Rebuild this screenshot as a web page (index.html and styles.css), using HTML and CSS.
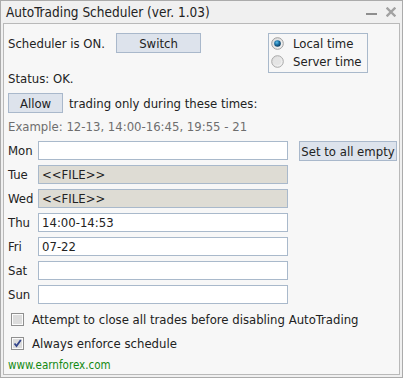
FILE: index.html
```html
<!DOCTYPE html>
<html>
<head>
	<title>AutoTrading Scheduler</title>
	<link rel="stylesheet" href="styles.css">
</head>
<body>
	<!-- dialog window -->
	<div class="window">
		<div class="titlebar">
			<span class="title">AutoTrading Scheduler (ver. 1.03)</span>
			<span class="controls">
				<svg width="11" height="10" viewBox="0 0 11 10"><rect x="0" y="6" width="11" height="2" fill="#8e8e8e"/></svg>
				<svg width="10" height="10" viewBox="0 0 10 10"><path d="M1.5 1.5 L8.5 8.5 M8.5 1.5 L1.5 8.5" stroke="#a2a2a2" stroke-width="2.4" stroke-linecap="square"/></svg>
			</span>
		</div>
		<div class="panel">
			<div class="top">
				<div class="top-left">
					<div class="sched">
						<span class="sched-label">Scheduler is ON.</span>
						<button class="btn btn-switch" type="button">Switch</button>
					</div>
					<div class="status">Status: OK.</div>
				</div>
				<!-- time source -->
				<div class="timebox">
					<div class="radio">
						<svg width="13" height="13" viewBox="0 0 13 13">
							<defs>
								<radialGradient id="dot" cx="0.4" cy="0.35" r="0.7">
									<stop offset="0" stop-color="#5fc0ea"/>
									<stop offset="0.5" stop-color="#1a6fa3"/>
									<stop offset="1" stop-color="#0c3553"/>
								</radialGradient>
								<linearGradient id="ring" x1="0" y1="0" x2="1" y2="1">
									<stop offset="0" stop-color="#d9d9d9"/>
									<stop offset="1" stop-color="#f7f7f7"/>
								</linearGradient>
							</defs>
							<circle cx="6.5" cy="6.5" r="5.8" fill="url(#ring)" stroke="#9d9d9d"/>
							<circle cx="6.5" cy="6.5" r="3.3" fill="url(#dot)"/>
						</svg>
						<span>Local time</span>
					</div>
					<div class="radio">
						<svg width="13" height="13" viewBox="0 0 13 13">
							<circle cx="6.5" cy="6.5" r="5.8" fill="url(#ring)" stroke="#a8a8a8"/>
							<circle cx="6.5" cy="6.5" r="3.6" fill="#e4e4e4"/>
						</svg>
						<span>Server time</span>
					</div>
				</div>
			</div>
			<div class="allow">
				<button class="btn btn-allow" type="button">Allow</button>
				<span class="allow-text">trading only during these times:</span>
			</div>
			<div class="example">Example: 12-13, 14:00-16:45, 19:55 - 21</div>
			<!-- week days -->
			<div class="days">
				<label class="day">Mon</label>
				<input class="day-input" type="text" value="">
				<button class="btn btn-empty" type="button">Set to all empty</button>
				<label class="day">Tue</label>
				<input class="day-input locked" type="text" value="<<FILE>>" readonly>
				<span></span>
				<label class="day">Wed</label>
				<input class="day-input locked" type="text" value="<<FILE>>" readonly>
				<span></span>
				<label class="day">Thu</label>
				<input class="day-input" type="text" value="14:00-14:53">
				<span></span>
				<label class="day">Fri</label>
				<input class="day-input" type="text" value="07-22">
				<span></span>
				<label class="day">Sat</label>
				<input class="day-input" type="text" value="">
				<span></span>
				<label class="day">Sun</label>
				<input class="day-input" type="text" value="">
				<span></span>
			</div>
			<div class="checks">
				<div class="check">
					<svg width="13" height="13" viewBox="0 0 13 13">
						<rect x="0.5" y="0.5" width="12" height="12" fill="#fbfbfb" stroke="#8f8f8f"/>
						<rect x="2" y="2" width="9" height="9" fill="#dcdcdc"/>
					</svg>
					<span>Attempt to close all trades before disabling AutoTrading</span>
				</div>
				<div class="check">
					<svg width="13" height="13" viewBox="0 0 13 13">
						<rect x="0.5" y="0.5" width="12" height="12" fill="#fbfbfb" stroke="#8f8f8f"/>
						<rect x="2" y="2" width="9" height="9" fill="#dcdcdc"/>
						<path d="M3.5 6.5 L5.5 9 L9.8 3" fill="none" stroke="#34468c" stroke-width="1.8"/>
					</svg>
					<span>Always enforce schedule</span>
				</div>
			</div>
			<div class="footer">www.earnforex.com</div>
		</div>
	</div>
</body>
</html>
```

FILE: styles.css
```css
body {
	margin: 0;
	font-family: "DejaVu Sans Condensed", "DejaVu Sans", sans-serif;
	font-stretch: condensed;
	font-size: 13px;
	color: #222;
}
.window {
	width: 403px;
	height: 378px;
	box-sizing: border-box;
	border: 1px solid #ababab;
	background: #f0f0f0;
	display: flex;
	flex-direction: column;
}
.titlebar {
	height: 22px;
	display: flex;
	align-items: center;
	padding: 0 6px 0 5px;
	font-size: 13.5px;
}
.title {
	flex: 1;
}
.controls {
	display: flex;
	align-items: center;
	gap: 9px;
}
.panel {
	flex: 1;
	margin: 0 2px 2px 2px;
	border: 1px solid #b9b9b9;
	background: #f7f7f7;
	padding: 9px 4px 0 4px;
}
.top {
	display: flex;
}
.top-left {
	width: 260px;
}
.sched {
	display: flex;
	align-items: center;
	height: 20px;
}
.sched-label {
	width: 108px;
}
.btn {
	font: inherit;
	color: #222;
	height: 20px;
	padding: 0;
	border: 1px solid #a9b8cb;
	background: #dde3ec;
}
.btn-switch {
	width: 85px;
}
.status {
	margin-top: 18px;
	line-height: 16px;
}
.timebox {
	width: 100px;
	height: 40px;
	box-sizing: border-box;
	border: 1px solid #a9b9cb;
	padding-left: 2px;
}
.radio {
	display: flex;
	align-items: center;
	height: 18px;
}
.radio span {
	margin-left: 9px;
}
.allow {
	display: flex;
	align-items: center;
	margin-top: 6px;
}
.btn-allow {
	width: 55px;
}
.allow-text {
	margin-left: 6px;
}
.example {
	margin-top: 6px;
	line-height: 16px;
	color: #6e6e6e;
}
.days {
	margin-top: 6px;
	display: grid;
	grid-template-columns: 30px 250px auto;
	grid-auto-rows: 19px;
	row-gap: 5px;
}
.day {
	line-height: 19px;
}
.day-input {
	height: 19px;
	box-sizing: border-box;
	border: 1px solid #a9b9cb;
	background: #fff;
	font: inherit;
	color: #222;
	padding: 0 3px;
	margin: 0;
	outline: none;
}
.day-input.locked {
	background: #dedcd4;
}
.btn-empty {
	width: 98px;
	margin-left: 11px;
}
.checks {
	margin-top: 3px;
}
.check {
	display: flex;
	align-items: center;
	height: 24px;
	padding-left: 3px;
}
.check span {
	margin-left: 8px;
}
.footer {
	margin-top: 3px;
	color: #138a13;
	font-size: 11.5px;
	line-height: 14px;
}
```
